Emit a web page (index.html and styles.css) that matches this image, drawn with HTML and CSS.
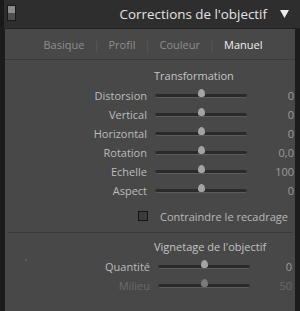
FILE: index.html
```html
<!DOCTYPE html>
<html lang="fr">
<head>
    <meta charset="UTF-8">
    <title>Corrections de l'objectif</title>
    <link rel="stylesheet" href="styles.css">
</head>
<body>

<div class="panel">
    <div class="panel-header">
        <span class="switch"></span>
        <h1>Corrections de l'objectif</h1>
        <svg class="collapse" width="9" height="8" viewBox="0 0 9 8"><path d="M0 0 H9 L4.5 8 Z" fill="#ececec"/></svg>
    </div>

    <div class="panel-body">
        <div class="tabs">
            <span class="tab">Basique</span>
            <span class="sep">|</span>
            <span class="tab">Profil</span>
            <span class="sep">|</span>
            <span class="tab">Couleur</span>
            <span class="sep">|</span>
            <span class="tab active">Manuel</span>
        </div>

        <div class="section">
            <h2>Transformation</h2>
            <div class="row"><span class="label">Distorsion</span><span class="slider"><i></i></span><span class="value">0</span></div>
            <div class="row"><span class="label">Vertical</span><span class="slider"><i></i></span><span class="value">0</span></div>
            <div class="row"><span class="label">Horizontal</span><span class="slider"><i></i></span><span class="value">0</span></div>
            <div class="row"><span class="label">Rotation</span><span class="slider"><i></i></span><span class="value">0,0</span></div>
            <div class="row"><span class="label">Echelle</span><span class="slider"><i></i></span><span class="value">100</span></div>
            <div class="row"><span class="label">Aspect</span><span class="slider"><i></i></span><span class="value">0</span></div>
            <label class="check"><span class="box"></span>Contraindre le recadrage</label>
        </div>

        <div class="section second">
            <span class="dot"></span>
            <h2>Vignetage de l'objectif</h2>
            <div class="row"><span class="label">Quantité</span><span class="slider"><i></i></span><span class="value">0</span></div>
            <div class="row disabled"><span class="label">Milieu</span><span class="slider"><i></i></span><span class="value">50</span></div>
        </div>
    </div>
</div>

</body>
</html>
```

FILE: styles.css
```css
body {
    margin: 0;
    background: #1c1c1c;
    font-family: 'Open Sans', sans-serif;
}

.panel {
    width: 300px;
    height: 311px;
    overflow: hidden;
    display: flex;
    flex-direction: column;
}

/* Header */
.panel-header {
    height: 29px;
    display: flex;
    align-items: center;
    background: #2e2e2e;
    border-left: 4px solid #1a1a1a;
    border-bottom: 1px solid #222;
    box-sizing: border-box;
}

.switch {
    width: 7px;
    height: 14px;
    margin-left: 3px;
    margin-top: -2px;
    border: 1px solid #1a1a1a;
    background: linear-gradient(to bottom, #8c8c8c 0, #8c8c8c 50%, #4e4e4e 50%, #4e4e4e 100%);
}

.panel-header h1 {
    flex: 1;
    margin: 0;
    font-size: 13.4px;
    font-weight: normal;
    color: #e4e4e4;
    text-align: right;
}

.collapse {
    margin: 0 11px 0 13px;
}

/* Body */
.panel-body {
    flex: 1;
    background: #484848;
    border-left: 5px solid #1c1c1c;
    border-right: 5px solid #1c1c1c;
}

.tabs {
    height: 31px;
    display: flex;
    align-items: center;
    justify-content: center;
    gap: 9px;
    padding-left: 6px;
    font-size: 11px;
    color: #8e8e8e;
    border-bottom: 1px solid #3a3a3a;
    box-sizing: border-box;
}

.tabs .sep {
    color: #5c5c5c;
}

.tabs .active {
    color: #f0f0f0;
}

.section {
    position: relative;
    padding-top: 8px;
}

.section h2 {
    margin: 0 0 2px 149px;
    font-size: 11px;
    font-weight: normal;
    color: #c4c4c4;
    height: 16px;
    line-height: 16px;
}

.row {
    display: flex;
    align-items: center;
    height: 19px;
    font-size: 11px;
}

.row .label {
    width: 142px;
    text-align: right;
    color: #bcbcbc;
}

.slider {
    position: relative;
    width: 92px;
    height: 3px;
    margin-left: 8px;
    background: #2a2a2a;
    border-bottom: 1px solid #5c5c5c;
    border-radius: 2px;
}

.slider i {
    position: absolute;
    left: 43px;
    top: -5px;
    width: 7px;
    height: 8px;
    background: #a4a4a4;
    border-radius: 50% 50% 3px 3px / 70% 70% 3px 3px;
}

.row .value {
    flex: 1;
    padding-right: 1px;
    text-align: right;
    color: #9c9c9c;
}

.disabled .label,
.disabled .value {
    color: #6a6a6a;
}

.disabled .slider i {
    background: #7a7a7a;
}

.check {
    display: flex;
    align-items: center;
    gap: 12px;
    margin: 7px 0 0 133px;
    height: 18px;
    font-size: 11px;
    color: #b8b8b8;
}

.check .box {
    width: 8px;
    height: 8px;
    border: 1px solid #161616;
    background: #3c3c3c;
}

.second {
    margin: 7px 2px 0 3px;
    border-top: 1px solid #3a3a3a;
    padding-top: 6px;
}

.second h2 {
    margin-left: 146px;
}

.dot {
    position: absolute;
    left: 17px;
    top: 26px;
    width: 2px;
    height: 2px;
    background: #5a6a4a;
}
```
